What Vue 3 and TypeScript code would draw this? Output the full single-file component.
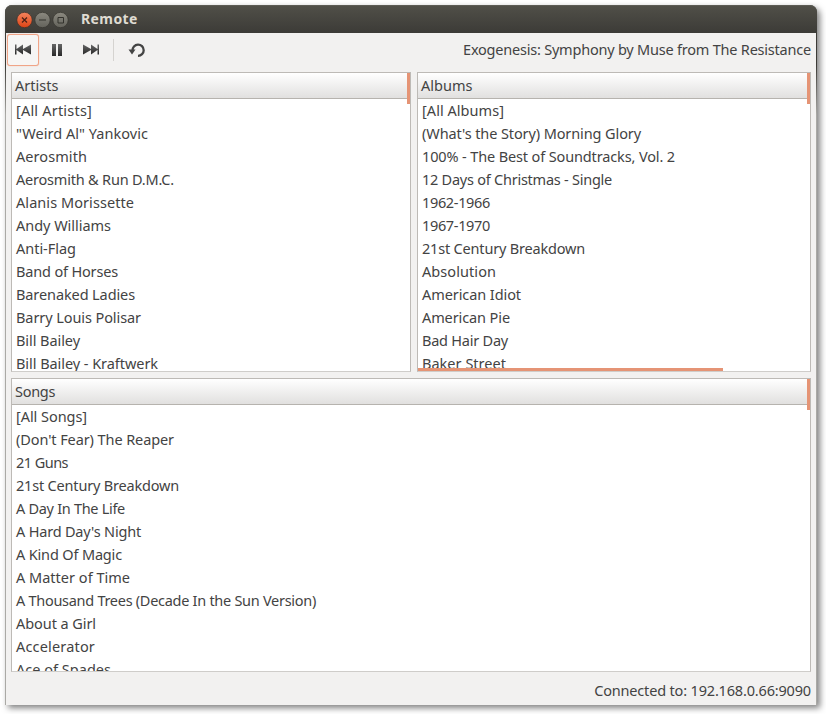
<script setup lang="ts">
interface Row { text: string; width: number }
interface Pane { id: string; title: string; rows: Row[]; across?: boolean }

const row = (text: string, width: number): Row => ({ text, width })

const panes: Pane[] = [
  { id: 'artists', title: 'Artists', rows: [
    row('[All Artists]', 76), row('"Weird Al" Yankovic', 132), row('Aerosmith', 71),
    row('Aerosmith & Run D.M.C.', 158), row('Alanis Morissette', 118), row('Andy Williams', 95),
    row('Anti-Flag', 60), row('Band of Horses', 102), row('Barenaked Ladies', 119),
    row('Barry Louis Polisar', 125), row('Bill Bailey', 64), row('Bill Bailey - Kraftwerk', 142),
  ] },
  { id: 'albums', title: 'Albums', across: true, rows: [
    row('[All Albums]', 82), row("(What's the Story) Morning Glory", 219),
    row('100% - The Best of Soundtracks, Vol. 2', 253), row('12 Days of Christmas - Single', 190),
    row('1962-1966', 68), row('1967-1970', 68), row('21st Century Breakdown', 163),
    row('Absolution', 74), row('American Idiot', 99), row('American Pie', 88),
    row('Bad Hair Day', 86), row('Baker Street', 84),
  ] },
  { id: 'songs', title: 'Songs', rows: [
    row('[All Songs]', 71), row("(Don't Fear) The Reaper", 158), row('21 Guns', 52),
    row('21st Century Breakdown', 163), row('A Day In The Life', 109), row("A Hard Day's Night", 125),
    row('A Kind Of Magic', 106), row('A Matter of Time', 114),
    row('A Thousand Trees (Decade In the Sun Version)', 300), row('About a Girl', 80),
    row('Accelerator', 79), row('Ace of Spades', 95),
  ] },
]

const ctx = document.createElement('canvas').getContext('2d')!
ctx.font = '14.5px "Noto Sans"'
const tracking = (r: Row) => ({
  letterSpacing: ((r.width - ctx.measureText(r.text).width) / r.text.length).toFixed(3) + 'px',
})
</script>

<template>
  <div class="desktop">
    <div class="window">
      <header class="titlebar">
        <svg class="controls" width="54" height="18" viewBox="0 0 54 18">
          <defs>
            <linearGradient id="close" x2="0" y2="1"><stop stop-color="#f4845e" /><stop offset="1" stop-color="#dc4314" /></linearGradient>
            <linearGradient id="ctl" x2="0" y2="1"><stop stop-color="#8b8980" /><stop offset="1" stop-color="#63625b" /></linearGradient>
          </defs>
          <circle cx="9.5" cy="9" r="7.7" fill="url(#close)" stroke="#3a2f29" stroke-width=".7" />
          <circle cx="27.5" cy="9" r="7.700" fill="url(#ctl)" stroke="#33322d" stroke-width=".7" />
          <circle cx="45.5" cy="9" r="7.700" fill="url(#ctl)" stroke="#33322d" stroke-width=".7" />
          <path d="M7 6.500l5 5M12 6.500l-5 5" stroke="#4b2015" stroke-width="1.2" />
          <path d="M24 9h7M43 6.500h5.500v5.500H43z" fill="none" stroke="#33322d" />
        </svg>
        <span class="name">Remote</span>
      </header>
      <div class="toolbar">
        <button class="tool focused" aria-label="Previous">
          <svg width="18" height="12" viewBox="0 0 18 12"><path d="M1 .5h1.500v4.500L9 .5v4.500L17 .5v10L9 6v4.500L2.500 6v4.500H1z" fill="url(#ink)" /></svg>
        </button>
        <button class="tool" aria-label="Pause">
          <svg width="12" height="12" viewBox="0 0 12 12"><path d="M1 0h4v12H1zM7 0h4v12H7z" fill="url(#ink)" /></svg>
        </button>
        <button class="tool" aria-label="Next">
          <svg width="18" height="12" viewBox="0 0 18 12">
            <defs><linearGradient id="ink" x2="0" y2="1"><stop stop-color="#666" /><stop offset="1" stop-color="#292929" /></linearGradient></defs>
            <path d="M17 .5h-1.500v4.500L9 .5v4.500L1 .5v10L9 6v4.500L15.500 6v4.500H17z" fill="url(#ink)" />
          </svg>
        </button>
        <i class="divider"></i>
        <button class="tool" aria-label="Refresh">
          <svg width="18" height="16" viewBox="0 0 18 16"><path d="M4.500 8.500a5.600 5.600 0 1 1 5.500 5.300" fill="none" stroke="#444" stroke-width="2.300" /><path d="M.5 7.500h7L4 12.500z" fill="#444" /></svg>
        </button>
        <span class="playing">Exogenesis: Symphony by Muse from The Resistance</span>
      </div>
      <main class="panes">
        <section v-for="p in panes" :key="p.id" class="pane" :class="p.id">
          <h2 class="heading">{{ p.title }}</h2>
          <ul class="list">
            <li v-for="r in p.rows" :key="r.text" class="row" :style="tracking(r)">{{ r.text }}</li>
          </ul>
          <i class="thumb"></i>
          <i v-if="p.across" class="thumb across"></i>
        </section>
      </main>
      <footer class="status"><span>Connected to: 192.168.0.66:9090</span></footer>
    </div>
  </div>
</template>

<style>
body { margin: 0; background: #fff; }
</style>

<style scoped>
* { box-sizing: border-box; }
.desktop { width: 826px; height: 714px; padding: 5px 9px 9px 5px; overflow: hidden; font: 14.5px "Noto Sans", sans-serif; color: #434343; }
.window { width: 812px; height: 700px; display: flex; flex-direction: column; border-radius: 7px 7px 0 0; box-shadow: 3px 3px 6px rgba(0, 0, 0, .5); background: linear-gradient(#3c3b37 28px, #3c3b37 60px, #aaa9a5 110px); }
.titlebar { height: 28px; flex: none; display: flex; padding: 5px 10px; border-radius: 7px 7px 0 0; border-top: 1px solid #5c5b54; background: linear-gradient(#504f48, #3c3b37); }
.controls { flex: none; }
.name { margin-left: 12px; color: #dfdbd2; font-weight: 700; font-size: 14px; line-height: 15px; letter-spacing: .4px; }
.toolbar { height: 39px; flex: none; margin: 0 1px; padding: 1px 5px 6px 1px; display: flex; align-items: center; background: #f2f1f0; }
.tool { width: 32px; height: 32px; margin-right: 2px; padding: 0 0 1px; display: flex; align-items: center; justify-content: center; border: 1px solid transparent; border-radius: 3px; background: none; }
.focused { border-color: #f0a487; background: #f6f5f4; box-shadow: 0 0 1px #f0a487; }
.divider { width: 1px; height: 22px; margin: 0 7px 0 4px; background: #d5d3d0; }
.playing { margin-left: auto; padding-bottom: 2px; white-space: nowrap; letter-spacing: -.215px; }
.panes { flex: 1; margin: 0 1px; padding: 0 5px; display: grid; grid-template-columns: 400px 394px; grid-template-rows: 300px 294px; gap: 6px; background: #f2f1f0; }
.pane { position: relative; overflow: hidden; border: 1px solid #bdbab6; border-bottom-color: #cfcdca; background: #fff; }
.songs { grid-column: 1 / 3; }
.heading { height: 26px; margin: 0; padding-left: 3px; font-size: 14.5px; font-weight: 400; line-height: 24px; border-bottom: 1px solid #b6b3ae; background: linear-gradient(#fff, #e1e0df); }
.songs .heading { letter-spacing: -.3px; }
.list { margin: 0; padding: 0 0 0 4px; list-style: none; }
.row { height: 23px; line-height: 22px; white-space: pre; }
.thumb { position: absolute; top: 0; right: 0; width: 3px; height: 31px; background: #e59475; }
.across { top: auto; bottom: 0; left: 0; width: 305px; height: 3px; }
.status { height: 33px; flex: none; margin: 0 1px 1px; padding: 2px 5px 0; display: flex; align-items: center; justify-content: flex-end; letter-spacing: -.17px; background: #f2f1f0; }
</style>
